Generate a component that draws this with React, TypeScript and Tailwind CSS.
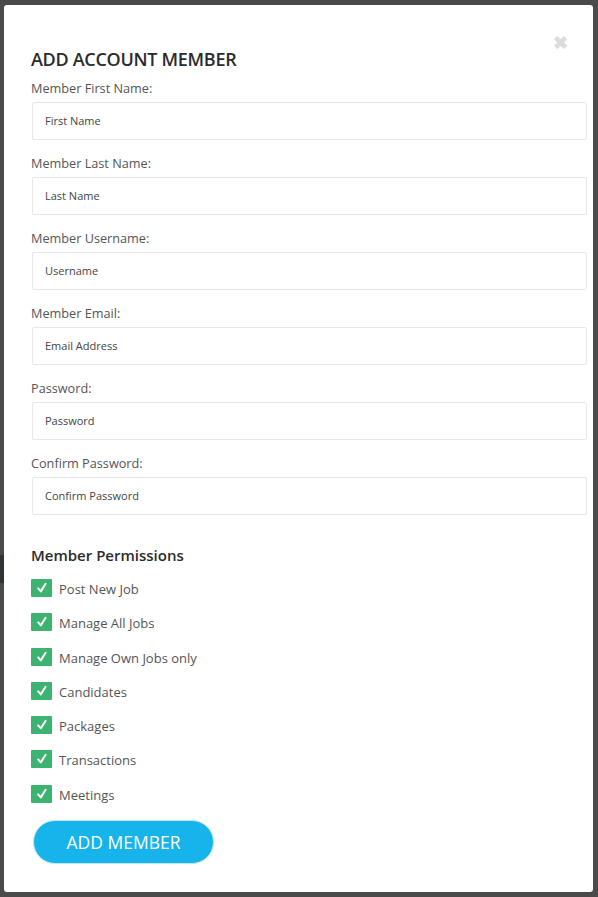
import React from "react";

const fields = [
  { label: "Member First Name:", ph: "First Name" },
  { label: "Member Last Name:", ph: "Last Name" },
  { label: "Member Username:", ph: "Username" },
  { label: "Member Email:", ph: "Email Address" },
  { label: "Password:", ph: "Password" },
  { label: "Confirm Password:", ph: "Confirm Password" },
];

const perms = [
  "Post New Job",
  "Manage All Jobs",
  "Manage Own Jobs only",
  "Candidates",
  "Packages",
  "Transactions",
  "Meetings",
];

function Check() {
  return (
    <span className="flex h-[18px] w-[21px] shrink-0 items-center justify-center rounded-[1px] bg-[#3cb371]">
      <svg width="12" height="12" viewBox="0 0 12 12">
        <path d="M2.2 6.4 L4.8 9.4 L9.6 1.8" fill="none" stroke="#fff" strokeWidth="2" strokeLinecap="round" strokeLinejoin="round" />
      </svg>
    </span>
  );
}

export default function App() {
  return (
    <div
      className="relative flex h-[897px] w-[598px] bg-[#4a4a4a] pb-[5px] pl-[4px] pr-[5px] pt-[5px]"
      style={{ fontFamily: '"Open Sans", "Noto Sans", Arial, sans-serif' }}
    >
      <div className="absolute left-0 top-[555px] h-[28px] w-[4px] bg-[#2f3437]" />
      <div className="relative flex-1 rounded-[3px] bg-white pl-[28px] pr-[6px] pt-[40px]">
        <button className="absolute right-[25px] top-[28px] text-[18px] font-bold leading-none text-[#dcdcdc]">
          ✖
        </button>
        <h2 className="mb-[6px] ml-[-1px] text-[18px] font-semibold leading-[28px] tracking-[-0.3px] text-[#2b2b2b]">
          ADD ACCOUNT MEMBER
        </h2>
        {fields.map((f) => (
          <div key={f.label} className="mb-[14px]">
            <div className="mb-[5px] ml-[-1px] text-[12.7px] leading-[18px] text-[#555]">{f.label}</div>
            <div className="flex h-[38px] items-center rounded-[2px] border border-[#e8e8e8] pl-[12px] text-[11px] text-[#444]">
              {f.ph}
            </div>
          </div>
        ))}
        <h3 className="ml-[-1px] mt-[28px] text-[15px] font-semibold leading-[24px] text-[#2b2b2b]">
          Member Permissions
        </h3>
        <div className="mt-[12px] flex flex-col">
          {perms.map((p) => (
            <div key={p} className="ml-[-1px] flex h-[34.3px] items-start gap-[7px]">
              <Check />
              <span className="mt-[1px] text-[13px] leading-[18px] text-[#555]">{p}</span>
            </div>
          ))}
        </div>
        <button className="ml-[1px] mt-[1px] h-[44px] w-[181px] rounded-full border border-[#bde8f7] bg-[#16b4ea] text-[17.5px] font-normal text-white">
          ADD MEMBER
        </button>
      </div>
    </div>
  );
}
